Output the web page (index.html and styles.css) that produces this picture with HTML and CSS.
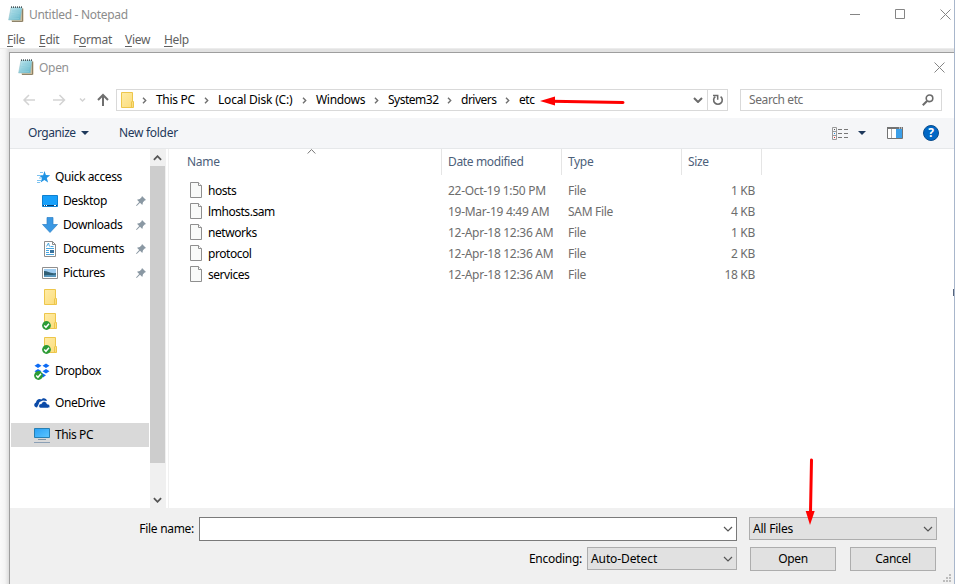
FILE: index.html
```html
<!DOCTYPE html>
<html lang="en">
<head>
<meta charset="utf-8">
<title>Untitled - Notepad</title>
<link rel="stylesheet" href="styles.css">
</head>
<body>
<svg class="defs" aria-hidden="true">
  <defs>
    <linearGradient id="pad" x1="0" y1="0" x2="1" y2="1"><stop offset="0" stop-color="#c4e9f0"/><stop offset="1" stop-color="#5fb4c8"/></linearGradient>
    <linearGradient id="fold" x1="0" y1="0" x2="1" y2="1"><stop offset="0" stop-color="#ffeca6"/><stop offset="1" stop-color="#fbdc7b"/></linearGradient>
    <linearGradient id="scr" x1="0" y1="0" x2="1" y2="1"><stop offset="0" stop-color="#29a0f5"/><stop offset="1" stop-color="#5cc6ff"/></linearGradient>
    <symbol id="notepad" viewBox="0 0 16 17">
      <path d="M14 2.500h1.500V15.500H3.500v-1z" fill="#cdbb98"/>
      <path d="M14.500 2.500V15.500H4" fill="none" stroke="#83785f" stroke-width=".9"/>
      <path d="M3 1.500h11L12.300 14H.6z" fill="url(#pad)" stroke="#8dbcc6" stroke-width=".5"/>
      <path d="M4 5h8M3.600 7.500h8M3.200 10h8M3 12.500h8" stroke="#8fcfdb" stroke-width=".6"/>
      <path d="M3.500 .3v1.700M5.500 .3v1.700M7.500 .3v1.700M9.500 .3v1.700M11.500 .3v1.700M13.500 .3v1.700" stroke="#4a5b5f"/>
    </symbol>
    <symbol id="folder" viewBox="0 0 14 16">
      <path d="M.5.5h11v9h1v6H.5z" fill="url(#fold)" stroke="#edc64b"/>
      <path d="M10.500 15.500V10l1-1" fill="none" stroke="#edc64b"/>
    </symbol>
    <symbol id="check" viewBox="0 0 8 8">
      <circle cx="4" cy="4" r="3.900" fill="#2c9b36"/><path d="M2 4l1.500 1.600L6.200 2.500" fill="none" stroke="#fff" stroke-width="1.300"/>
    </symbol>
    <symbol id="pin" viewBox="0 0 10 10">
      <path d="M6 0l4 4-1.300.5L7 6.300 6.300 9 4 6.700.7 10 0 9.500 3.200 6 1 3.700 3.800 3 5.600 1.300z" fill="#8a98a3"/>
    </symbol>
    <symbol id="file" viewBox="0 0 12 16">
      <path d="M.5.500h8l3 3v12H.5z" fill="#f9faf9" stroke="#8f8f8f"/><path d="M8.500.5v3h3" fill="#fff" stroke="#8f8f8f"/>
    </symbol>
    <symbol id="crumb" viewBox="0 0 5 7"><path d="M1 .7l2.700 2.800L1 6.300" fill="none" stroke="#707070" stroke-width="1.400"/></symbol>
    <symbol id="chev" viewBox="0 0 10 6"><path d="M1 1l4 4 4-4" fill="none" stroke="currentColor" stroke-width="var(--sw,1.200)"/></symbol>
    <symbol id="close" viewBox="0 0 11 11"><path d="M.5.5l10 10M10.500.5l-10 10" stroke="#858585" fill="none"/></symbol>
  </defs>
</svg>
<div class="notepad">
  <header class="titlebar">
    <svg class="app-icon"><use href="#notepad"/></svg>
    <span class="title">Untitled - Notepad</span>
    <div class="controls">
      <svg width="11" height="11"><path d="M0 5.500h10" stroke="#858585"/></svg>
      <svg width="11" height="11"><path d="M.5.500h9v9h-9z" fill="none" stroke="#858585"/></svg>
      <svg width="11" height="11"><use href="#close"/></svg>
    </div>
  </header>
  <nav class="menu">
    <span><u>F</u>ile</span><span><u>E</u>dit</span><span>F<u>o</u>rmat</span><span><u>V</u>iew</span><span><u>H</u>elp</span>
  </nav>
  <div class="workspace">
    <section class="dialog">
      <header class="dialog-title">
        <svg class="app-icon"><use href="#notepad"/></svg>
        <span class="title">Open</span>
        <svg class="dialog-close" width="11" height="11"><use href="#close"/></svg>
      </header>
      <div class="address-row">
        <svg class="history" width="95" height="22">
          <g fill="none" stroke="#d3d3d3" stroke-width="1.500"><path d="M25 11H14.500M19 6l-5 5 5 5M43 11h11M49.500 6l5 5-5 5"/><path d="M70 9.500l2.500 2.500L75 9.500"/></g>
          <path d="M93 17V6.500M88 11l5-5 5 5" fill="none" stroke="#6f6f6f" stroke-width="2"/>
        </svg>
        <div class="address">
          <svg class="addr-folder" width="14" height="16"><use href="#folder"/></svg>
          <div class="crumbs">
            <svg class="sep"><use href="#crumb"/></svg><span class="c1">This PC</span>
            <svg class="sep"><use href="#crumb"/></svg><span class="c2">Local Disk (C:)</span>
            <svg class="sep"><use href="#crumb"/></svg><span class="c3">Windows</span>
            <svg class="sep"><use href="#crumb"/></svg><span class="c4">System32</span>
            <svg class="sep"><use href="#crumb"/></svg><span class="c5">drivers</span>
            <svg class="sep"><use href="#crumb"/></svg><span class="c6">etc</span>
          </div>
          <svg class="addr-drop"><use href="#chev"/></svg>
          <div class="refresh"><svg width="12" height="12"><path d="M3.300 2.600A4.300 4.300 0 1 0 8.600 2.600" fill="none" stroke="#6b6b6b" stroke-width="1.600"/><path d="M1 1.500h4.700v4.300" fill="none" stroke="#6b6b6b" stroke-width="1.500"/></svg></div>
        </div>
        <div class="search"><span>Search etc</span><svg width="12" height="12"><circle cx="7.500" cy="4.300" r="3.300" fill="none" stroke="#6b6b6b" stroke-width="1.600"/><path d="M5 7L.8 11.200" stroke="#6b6b6b" stroke-width="2"/></svg></div>
      </div>
      <div class="toolbar">
        <span class="organize">Organize</span><i class="tri"></i><span class="newfolder">New folder</span>
        <div class="tools">
          <svg width="17" height="13"><path d="M.5.500h4v12h-4zM.5 4.500h4M.5 8.500h4" fill="none" stroke="#9a9a9a"/><path d="M6 2.500h4M12 2.500h4M6 6.500h4M12 6.500h4M6 10.500h4M12 10.500h4" stroke="#777"/><path d="M2 2h1v1H2z" fill="#555"/><path d="M2 6h1v1H2z" fill="#268be0"/><path d="M2 10h1v1H2z" fill="#e02020"/></svg>
          <i class="tri"></i>
          <svg class="pane" width="16" height="12"><path d="M.5.500h15v11H.5z" fill="#fff" stroke="#737373"/><path d="M0 1h16" stroke="#737373" stroke-width="2"/><path d="M4.500 2v9" stroke="#aaa"/><path d="M9 2h6v9H9z" fill="#3c9fe8"/><path d="M12 1h1M14 1h1" stroke="#fff"/></svg>
          <span class="help">?</span>
        </div>
      </div>
      <div class="browser">
        <aside class="tree">
          <div class="node root"><svg class="ic" viewBox="0 0 16 16"><path d="M9.500 2l1.400 4 4.300.2-3.400 2.700 1.300 4.600-3.700-2.500-3.800 2.600 1.500-4.600L3.800 6.200h4.300z" fill="#1f93e4"/><path d="M5 3.500h3M2 6.500h4M4 9h3M2 11.500h4M2 13.500h3" stroke="#7cc2f0"/></svg><span>Quick access</span></div>
          <div class="node"><svg class="ic" viewBox="0 0 16 16"><path d="M.5 2.500h15v11H.5z" fill="#18a0fa" stroke="#0e80d0"/><path d="M1 12.500h14" stroke="#083f70"/><path d="M2 12.500h1M4 12.500h1M12 12.500h2" stroke="#fff"/></svg><span>Desktop</span><svg class="pin"><use href="#pin"/></svg></div>
          <div class="node"><svg class="ic" viewBox="0 0 16 16"><path d="M5 .5h6v7h4.500L8 15.500.5 7.500H5z" fill="#3a98e3" stroke="#2b7fc5" stroke-width=".7"/></svg><span>Downloads</span><svg class="pin"><use href="#pin"/></svg></div>
          <div class="node"><svg class="ic" viewBox="0 0 16 16"><path d="M2.500.500h8l3 3v12h-11z" fill="#fff" stroke="#8d8d8d"/><path d="M10.500.5v3h3" fill="none" stroke="#8d8d8d"/><path d="M4.500 5.500L6.500 2l1 3.500M8.500 5.500h3M4 7.500h8M4 9.500h3M4 11.500h3M4 13.500h8" fill="none" stroke="#49a6df"/><path d="M8 9h4v3H8z" fill="#38719c"/></svg><span>Documents</span><svg class="pin"><use href="#pin"/></svg></div>
          <div class="node"><svg class="ic" viewBox="0 0 16 16"><path d="M.5 2.500h15v11H.5z" fill="#fff" stroke="#8f8f8f"/><path d="M2 4h12v8H2z" fill="#9fcdf1"/><path d="M2 6c4 0 6 3 12 2v4H2z" fill="#315f75"/><path d="M2 10.500c4-1 7 0 12-1V12H2z" fill="#5997bc"/></svg><span>Pictures</span><svg class="pin"><use href="#pin"/></svg></div>
          <div class="node"><svg class="fo"><use href="#folder"/></svg></div>
          <div class="node"><svg class="fo"><use href="#folder"/></svg><svg class="badge"><use href="#check"/></svg></div>
          <div class="node"><svg class="fo"><use href="#folder"/></svg><svg class="badge"><use href="#check"/></svg></div>
          <div class="node top dropbox"><svg class="ic" viewBox="0 0 16 16"><path d="M4 .5l3.500 2.300L4 5 .5 2.800zM12 .5l3.500 2.300L12 5 8.500 2.800zM4 6l3.500 2.200L4 10.500.5 8.200zM12 6l3.500 2.200L12 10.500 8.500 8.200zM8 10l4 2.200L9 14.500 6 12z" fill="#0c6bf5"/></svg><svg class="badge"><use href="#check"/></svg><span>Dropbox</span></div>
          <div class="node top onedrive"><svg class="ic" viewBox="0 0 16 16"><path d="M3 12.500C0 12.500-.8 8.500 2 7.500 2.300 4.500 5.300 3 7.500 4.500 9 2.200 12.500 3 13 6L9 5.500 5.500 7 4.500 9.500z" fill="#0a4aa8"/><path d="M6.500 13c-3-1-1.500-4.500 1-4.300C8.500 5.500 12.500 6 13 9c3.500 0 3.700 4 .8 4z" fill="#0a4aa8" stroke="#fff" stroke-width=".5"/></svg><span>OneDrive</span></div>
          <div class="node top thispc"><svg class="ic" viewBox="0 0 16 16"><path d="M.5 1.500h15v9H.5z" fill="url(#scr)" stroke="#277fb2"/><path d="M4 12.500h8" stroke="#7d93a3"/><path d="M0 15.500h16" stroke="#8ca0b5"/></svg><span>This PC</span></div>
        </aside>
        <div class="scrollbar">
          <svg class="up"><use href="#chev"/></svg><div class="thumb"></div><svg class="down"><use href="#chev"/></svg>
        </div>
        <main class="files">
          <div class="row head"><span class="name">Name<svg class="sort" width="9" height="5"><path d="M.7 4.500l3.800-4 3.800 4" fill="none" stroke="#777"/></svg></span><span>Date modified</span><span>Type</span><span class="size">Size</span></div>
          <div class="row"><span class="name"><svg class="fi"><use href="#file"/></svg>hosts</span><span class="date">22-Oct-19 1:50 PM</span><span>File</span><span class="size">1 KB</span></div>
          <div class="row"><span class="name"><svg class="fi"><use href="#file"/></svg>lmhosts.sam</span><span class="date">19-Mar-19 4:49 AM</span><span>SAM File</span><span class="size">4 KB</span></div>
          <div class="row"><span class="name"><svg class="fi"><use href="#file"/></svg>networks</span><span class="date">12-Apr-18 12:36 AM</span><span>File</span><span class="size">1 KB</span></div>
          <div class="row"><span class="name"><svg class="fi"><use href="#file"/></svg>protocol</span><span class="date">12-Apr-18 12:36 AM</span><span>File</span><span class="size">2 KB</span></div>
          <div class="row"><span class="name"><svg class="fi"><use href="#file"/></svg>services</span><span class="date">12-Apr-18 12:36 AM</span><span>File</span><span class="size">18 KB</span></div>
        </main>
      </div>
      <footer class="footer">
        <label class="l1">File name:</label>
        <div class="combo filename"><svg class="dd"><use href="#chev"/></svg></div>
        <div class="combo filter"><span>All Files</span><svg class="dd"><use href="#chev"/></svg></div>
        <div class="actions">
          <label>Encoding:</label>
          <div class="combo encoding"><span>Auto-Detect</span><svg class="dd"><use href="#chev"/></svg></div>
          <div class="button">Open</div>
          <div class="button">Cancel</div>
        </div>
        <svg class="grip" width="8" height="8"><path d="M6 0h2v2H6zM3 3h2v2H3zM6 3h2v2H6zM0 6h2v2H0zM3 6h2v2H3zM6 6h2v2H6z" fill="#bcbcbc"/></svg>
      </footer>
    </section>
  </div>
  <svg class="arrow-left" width="86" height="12"><path d="M12 6.200L83 7.400" stroke="#f00" stroke-width="3" stroke-linecap="round"/><path d="M0 6L15 1.500v9z" fill="#f00"/></svg>
  <svg class="arrow-down" width="12" height="68"><path d="M6.500 2L5.500 54" stroke="#f00" stroke-width="3" stroke-linecap="round"/><path d="M.700 53h9L5 67z" fill="#f00"/></svg>
  <i class="edge-mark"></i>
</div>
</body>
</html>
```
FILE: styles.css
```css
* { box-sizing: border-box; }
body { margin: 0; font: 12px/16px "Noto Sans", "Open Sans", sans-serif; letter-spacing: -0.3px; color: #000; overflow: hidden; }
.defs { position: absolute; width: 0; height: 0; }
svg { display: block; flex: none; overflow: visible; }
span, label { white-space: nowrap; }
.notepad { position: relative; width: 955px; height: 584px; background: #fff; border-right: 1px solid #a8b6cb; overflow: hidden; display: flex; flex-direction: column; }
.titlebar { height: 30px; display: flex; align-items: center; padding: 0 3px 0 8px; color: #8c8c8c; }
.app-icon { width: 16px; height: 17px; margin-top: -1px; }
.title { margin-left: 5px; }
.controls { margin-left: auto; display: flex; gap: 34px; margin-top: -1px; }
.menu { height: 18px; display: flex; align-items: center; padding: 2px 0 0 7px; color: #606060; }
.menu span:nth-child(1) { width: 32px; }
.menu span:nth-child(2) { width: 34px; }
.menu span:nth-child(3) { width: 52px; }
.menu span:nth-child(4) { width: 39px; }
.menu u { text-underline-offset: 2px; }
.workspace { flex: 1; padding: 3px 0 0 9px; background: linear-gradient(90deg, #fafafa 0, #f4f4f4 5px, #dcdcdc 9px, #e2e2e2 10px); border-top: 1px solid #ececec; }
.dialog { height: 532px; border: 1px solid #9e9e9e; border-width: 1px 0 0 1px; background: #fff; display: flex; flex-direction: column; }
.dialog-title { height: 30px; display: flex; align-items: center; padding: 0 9px 0 8px; color: #929292; }
.dialog-title .app-icon { margin-top: -2px; }
.dialog-close { margin-left: auto; margin-top: -2px; }
.address-row { height: 35px; display: flex; align-items: flex-start; padding: 6px 12px 0 0; }
.history { margin-right: 11px; }
.address { width: 612px; height: 22px; border: 1px solid #d9d9d9; display: flex; align-items: center; }
.addr-folder { margin-left: 4px; margin-right: 7px; margin-top: -1px; }
.crumbs { display: flex; align-items: center; flex: 1; }
.crumbs .sep { width: 5px; height: 7px; margin-right: 9px; }
.c1 { width: 48px; } .c2 { width: 84px; letter-spacing: -0.2px; } .c3 { width: 58px; } .c4 { width: 59px; letter-spacing: -0.5px; } .c5 { width: 44px; letter-spacing: -0.5px; } .c6 { letter-spacing: -0.4px; }
.c4 { letter-spacing: -0.5px; }
.addr-drop { width: 10px; height: 6px; margin-right: 4px; --sw: 2; color: #6b6b6b; }
.refresh { width: 20px; height: 20px; border-left: 1px solid #d9d9d9; display: flex; align-items: center; justify-content: center; }
.search { width: 202px; height: 22px; margin-left: 12px; border: 1px solid #d9d9d9; display: flex; align-items: center; justify-content: space-between; padding: 0 7px 0 8px; color: #6d6d6d; }
.search span { letter-spacing: -0.4px; }
.toolbar { height: 31px; background: #f5f6f8; border-bottom: 1px solid #e6e8ea; display: flex; align-items: center; padding: 0 15px 0 18px; color: #1e395b; }
.organize { width: 53px; letter-spacing: -0.45px; }
.tri { width: 0; height: 0; border: 4px solid transparent; border-top-color: #1e395b; border-bottom: 0; }
.newfolder { margin-left: 30px; }
.tools { margin-left: auto; display: flex; align-items: center; }
.tools .tri { margin: 0 21px 0 9px; }
.pane { margin-right: 20px; }
.help { width: 16px; height: 16px; border-radius: 50%; background: #0067c5; border: 1px solid #0a4c8c; color: #fff; font-weight: 700; line-height: 14px; text-align: center; }
.browser { height: 359px; display: flex; }
.tree { width: 140px; padding: 16px 0 0 1px; letter-spacing: -0.4px; }
.node { position: relative; height: 24px; width: 138px; display: flex; align-items: center; padding-left: 31px; }
.node .ic { width: 16px; height: 16px; margin-right: 5px; }
.node.root { padding-left: 23px; }
.root .ic { margin-left: 1px; margin-right: 4px; }
.fo { width: 14px; height: 16px; margin-left: 2px; }
.badge { position: absolute; width: 9px; height: 9px; left: 31px; top: 12px; }
.pin { position: absolute; right: 3px; top: 7px; width: 10px; height: 10px; }
.node.top { padding-left: 23px; }
.dropbox { margin-top: 2px; }
.dropbox .badge { left: 23px; }
.onedrive, .thispc { margin-top: 8px; }
.thispc { background: #d9d9d9; }
.scrollbar { width: 16px; background: #f0f0f0; display: flex; flex-direction: column; align-items: flex-start; color: #555; --sw: 2; }
.up { width: 9px; height: 6px; margin: 6px 0 5px 3px; transform: rotate(180deg); }
.thumb { width: 15px; height: 297px; background: #cdcdcd; }
.down { width: 9px; height: 6px; margin: 34px 0 0 3px; }
.files { flex: 1; margin-left: 2px; border-left: 1px solid #f0f0f0; }
.row { height: 21px; display: grid; grid-template-columns: 273px 120px 120px 80px; align-items: center; color: #6d6d6d; }
.row > span { padding-left: 6px; }
.row .name { display: flex; align-items: center; padding-left: 21px; color: #000; position: relative; letter-spacing: -0.45px; }
.row .size { text-align: right; padding-right: 7px; }
.fi { width: 12px; height: 16px; margin: -1px 6px 0 0; }
.head { height: 26px; margin-bottom: 5px; color: #4c607a; }
.head > span { height: 26px; line-height: 26px; border-right: 1px solid #e5e5e5; }
.row.head > span { letter-spacing: -0.35px; }
.row.head .name { padding-left: 18px; color: #4c607a; letter-spacing: -0.3px; }
.row.head .size { text-align: left; }
.sort { position: absolute; left: 138px; top: 0; }
.footer { position: relative; flex: 1; background: #f0f0f0; padding: 9px 0 0; display: grid; grid-template-columns: 189px 538px 200px; grid-template-rows: 24px 24px; row-gap: 6px; }
.l1 { text-align: right; padding: 4px 5px 0 0; }
.combo { height: 24px; border: 1px solid #adadad; background: #e1e1e1; display: flex; align-items: center; padding: 0 3px; }
.dd { width: 10px; height: 6px; margin-left: auto; color: #555; }
.filename { background: #fff; border-color: #7a7a7a; }
.filter { height: 23px; margin-left: 12px; width: 188px; letter-spacing: -0.2px; }
.actions { grid-column: 1 / 4; display: flex; padding-left: 519px; }
.actions > * { flex: none; }
.actions label { width: 58px; padding-top: 4px; }
.encoding { width: 150px; height: 23px; margin-right: 13px; letter-spacing: -0.1px; }
.button { width: 86px; height: 24px; line-height: 22px; text-align: center; border: 1px solid #adadad; background: #e1e1e1; margin-right: 14px; }
.grip { position: absolute; right: 3px; bottom: 2px; }
.arrow-left { position: absolute; left: 540px; top: 95px; }
.arrow-down { position: absolute; left: 805px; top: 458px; }
.edge-mark { position: absolute; right: -1px; top: 289px; width: 2px; height: 7px; background: #56647c; }
```
